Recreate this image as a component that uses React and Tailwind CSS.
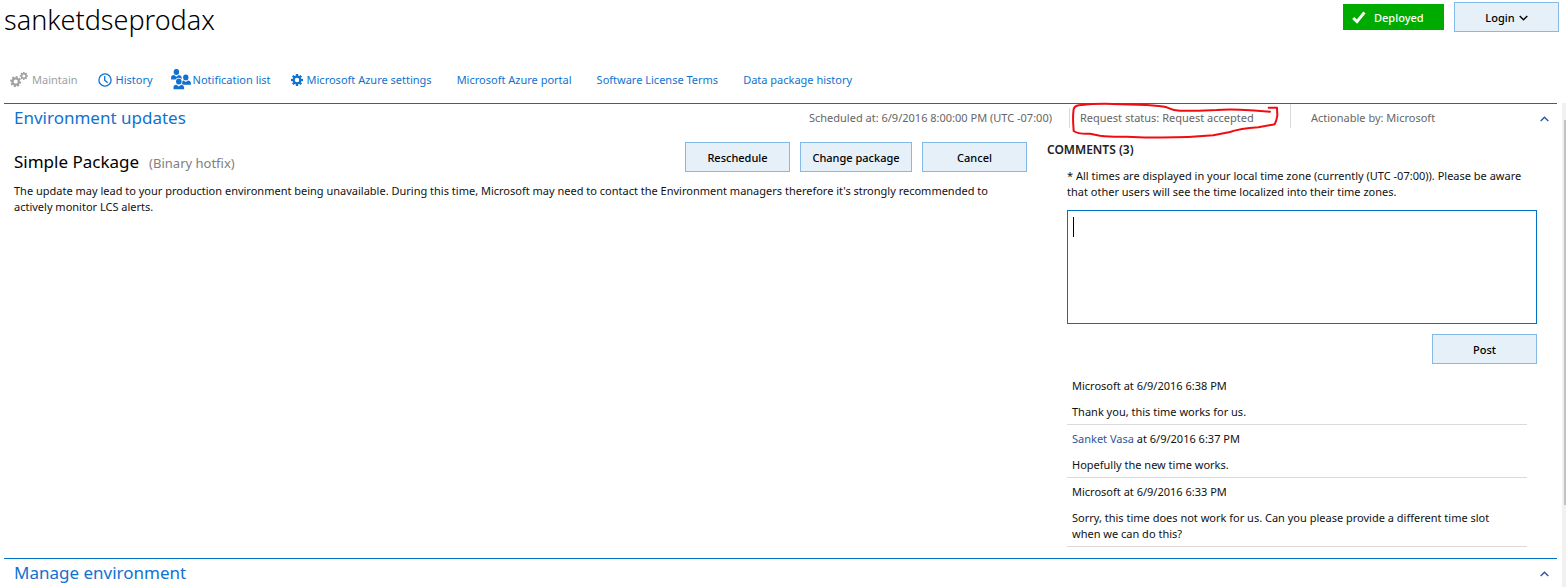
import { useState } from "react";

const COMMENTS = [
  { author: "Microsoft", time: "6/9/2016 6:38 PM", text: "Thank you, this time works for us." },
  { author: "Sanket Vasa", link: true, time: "6/9/2016 6:37 PM", text: "Hopefully the new time works." },
  {
    author: "Microsoft",
    time: "6/9/2016 6:33 PM",
    text: "Sorry, this time does not work for us. Can you please provide a different time slot when we can do this?",
  },
];

const TEETH = [0, 45, 90, 135, 180, 225, 270, 315];

function Gear({ x, y, scale = 1, rotate = 0 }) {
  return (
    <g transform={`translate(${x} ${y}) scale(${scale}) rotate(${rotate})`}>
      <circle r="3.4" fill="none" stroke="currentColor" strokeWidth="2.2" />
      {TEETH.map((angle) => (
        <rect key={angle} x="-1.2" y="-6.1" width="2.4" height="2.4" fill="currentColor" transform={`rotate(${angle})`} />
      ))}
    </g>
  );
}

function GearsIcon() {
  return (
    <svg width="18" height="18" viewBox="0 0 18 18" aria-hidden="true">
      <Gear x={5.7} y={10.6} scale={0.9} rotate={12} />
      <Gear x={13.8} y={4.9} scale={0.66} />
    </svg>
  );
}

function GearIcon() {
  return (
    <svg width="12" height="14" viewBox="0 0 12 14" aria-hidden="true">
      <Gear x={6} y={7} scale={0.98} />
    </svg>
  );
}

function ClockIcon() {
  return (
    <svg width="14" height="14" viewBox="0 0 14 14" fill="none" stroke="currentColor" strokeWidth="1.3" aria-hidden="true">
      <circle cx="7" cy="7" r="6.1" />
      <path d="M6.7 3v4.2l3 2.6" />
    </svg>
  );
}

function Person({ x, y, scale = 1 }) {
  return (
    <g transform={`translate(${x} ${y}) scale(${scale})`}>
      <ellipse cx="5" cy="2.9" rx="2.8" ry="3" />
      <path d="M-.3 10.6V8.6Q-.3 6.5 2.6 6.1L5 7.8l2.4-1.7q2.9.4 2.9 2.5v2z" />
    </g>
  );
}

function PeopleIcon() {
  return (
    <svg width="20" height="22" viewBox="0 0 20 22" fill="currentColor" aria-hidden="true">
      <Person x={0.4} y={0} />
      <Person x={10} y={5.6} scale={0.96} />
      <g stroke="#fff" strokeWidth="1.6">
        <Person x={2.8} y={9.6} />
      </g>
      <Person x={2.8} y={9.6} />
    </svg>
  );
}

function Chevron({ up = false }) {
  return (
    <svg width="9" height="6" viewBox="0 0 9 6" fill="none" stroke="currentColor" strokeWidth="1.4" aria-hidden="true">
      <path d={up ? "M.7 5 4.5 1.2 8.3 5" : "M.7 1 4.5 4.8 8.3 1"} />
    </svg>
  );
}

function Button({ children, className = "w-[105px]" }) {
  return (
    <button
      type="button"
      className={`flex h-[30px] items-center justify-center gap-1 whitespace-nowrap border border-[#84bae7] bg-[#e5f0f9] pt-px font-medium text-black ${className}`}
    >
      {children}
    </button>
  );
}

function NavLink({ icon, children, className = "gap-1" }) {
  return (
    <a href="#" className={`flex items-center whitespace-nowrap text-[#0f72d0] ${className}`}>
      {icon}
      {children}
    </a>
  );
}

function Toggle({ label, open, onToggle }) {
  return (
    <button
      type="button"
      aria-label={label}
      aria-expanded={open}
      onClick={onToggle}
      className="flex h-[29px] w-[26px] items-center justify-center text-[#2b579a]"
    >
      <Chevron up={open} />
    </button>
  );
}

function StatusMarker() {
  return (
    <svg
      className="pointer-events-none absolute -top-0.5 left-px h-[38px] w-[210px]"
      viewBox="90 21 630 114"
      fill="none"
      stroke="#f00d12"
      strokeWidth="6"
      strokeLinecap="round"
      strokeLinejoin="round"
      aria-hidden="true"
    >
      <path d="M686 38H711L712 62Q709 80 704 88L655 97Q600 101 570 111L520 121Q400 132 260 125Q210 126 180 122L150 116Q115 118 101 108L100 92Q98 65 101 42Q105 32 116 31Q180 24 240 28L320 30Q360 32 380 37Q398 46 420 47Q490 48 530 45Q560 42 600 44Q640 46 690 50" />
    </svg>
  );
}

function CommentsPanel() {
  const [draft, setDraft] = useState("");
  return (
    <section className="w-[510px] shrink-0 pr-5">
      <h3 className="text-[12px] leading-4 font-semibold text-[#222]">COMMENTS (3)</h3>
      <div className="pt-[10px] pl-5">
        <label htmlFor="comment" className="block">
          * All times are displayed in your local time zone (currently (UTC -07:00)). Please be aware that other users
          will see the time localized into their time zones.
        </label>
        <div className="relative mt-[10px]">
          <textarea
            id="comment"
            value={draft}
            onChange={(e) => setDraft(e.target.value)}
            className="block h-[114px] w-full resize-none border border-[#0072c6] px-1.5 py-2 outline-none"
          />
          {draft === "" && <span className="pointer-events-none absolute top-[7px] left-1.5 h-5 w-px bg-black" />}
        </div>
        <div className="mt-[10px] flex justify-end">
          <Button>Post</Button>
        </div>
        <ul className="mt-2 mr-[10px]">
          {COMMENTS.map((comment) => (
            <li key={comment.time} className="border-b border-[#dadada] pt-1.5 pr-5 pb-1 pl-[5px]">
              <p>
                {comment.link ? (
                  <a href="#" className="text-[#2b579a]">
                    {comment.author}
                  </a>
                ) : (
                  comment.author
                )}{" "}
                at {comment.time}
              </p>
              <p className="mt-[10px]">{comment.text}</p>
            </li>
          ))}
        </ul>
      </div>
    </section>
  );
}

export default function App() {
  const [updatesOpen, setUpdatesOpen] = useState(true);
  const [manageOpen, setManageOpen] = useState(true);

  return (
    <div className="flex min-h-screen flex-col bg-white font-['Noto_Sans','Open_Sans',sans-serif] text-[11px] leading-4 text-[#111]">
      <header className="flex items-start justify-between pt-0.5 pr-[7px] pl-1">
        <h1 className="text-[27px] leading-9 font-light text-black">sanketdseprodax</h1>
        <div className="flex gap-[10px]">
          <span className="mt-0.5 flex h-[26px] w-[101px] items-center gap-2 bg-[#00ab00] pt-px pl-[9px] font-medium text-white">
            <svg width="14" height="13" viewBox="0 0 14 13" fill="none" stroke="currentColor" strokeWidth="3" aria-hidden="true">
              <path d="M1.2 7 5 10.6 12.4 1.4" />
            </svg>
            Deployed
          </span>
          <Button>
            Login
            <Chevron />
          </Button>
        </div>
      </header>

      <nav className="mt-[31px] mb-[12px] flex h-[22px] items-center gap-[25px] pl-[10px]">
        <div className="flex items-center gap-5">
          <button type="button" disabled className="flex items-center gap-1 text-[#a0a0a0]">
            <GearsIcon />
            Maintain
          </button>
          <div className="flex items-center gap-[18px]">
            <NavLink icon={<ClockIcon />}>History</NavLink>
            <NavLink icon={<PeopleIcon />} className="gap-0.5">
              Notification list
            </NavLink>
          </div>
          <NavLink icon={<GearIcon />}>Microsoft Azure settings</NavLink>
        </div>
        <NavLink>Microsoft Azure portal</NavLink>
        <NavLink>Software License Terms</NavLink>
        <NavLink>Data package history</NavLink>
      </nav>

      <div className="flex grow">
        <main className="min-w-0 grow pl-1">
          <section className="border-t border-[#0072c6]">
            <div className="flex items-start justify-between pl-[10px]">
              <h2 className="text-[17px] leading-7 text-[#0f72d0]">Environment updates</h2>
              <div className="flex items-start text-[#666]">
                <p className="py-1.5 pr-[17px]">Scheduled at: 6/9/2016 8:00:00 PM (UTC -07:00)</p>
                <div className="relative w-[221px]">
                  <p className="mt-1 border-l border-[#dadada] py-0.5 pl-[10px]">Request status: Request accepted</p>
                  <StatusMarker />
                </div>
                <p className="w-[241px] border-l border-[#dadada] pt-1.5 pb-0.5 pl-5">Actionable by: Microsoft</p>
                <Toggle label="Environment updates" open={updatesOpen} onToggle={() => setUpdatesOpen(!updatesOpen)} />
              </div>
            </div>
            {updatesOpen && (
              <div className="flex gap-5 pt-[9px] pb-[11px] pl-[10px]">
                <div className="min-w-0 grow">
                  <div className="flex items-start justify-between">
                    <h3 className="flex items-baseline gap-[10px] pt-2 text-[17px] leading-6 text-black">
                      Simple Package
                      <span className="text-[13px] text-[#808080]">(Binary hotfix)</span>
                    </h3>
                    <div className="flex gap-[10px]">
                      <Button>Reschedule</Button>
                      <Button className="w-[112px]">Change package</Button>
                      <Button>Cancel</Button>
                    </div>
                  </div>
                  <p className="mt-2">
                    The update may lead to your production environment being unavailable. During this time, Microsoft may
                    need to contact the Environment managers therefore it's strongly recommended to actively monitor LCS
                    alerts.
                  </p>
                </div>
                <CommentsPanel />
              </div>
            )}
          </section>

          <section className="border-t border-[#0072c6]">
            <div className="flex items-start justify-between pl-[10px]">
              <h2 className="text-[17px] leading-7 text-[#0f72d0]">Manage environment</h2>
              <Toggle label="Manage environment" open={manageOpen} onToggle={() => setManageOpen(!manageOpen)} />
            </div>
          </section>
        </main>
        <div className="ml-[5px] w-1 shrink-0 bg-[#f1f1f1] pt-[17px] pl-0.5" aria-hidden="true">
          <div className="h-[385px] bg-[#c1c1c1]" />
        </div>
      </div>
    </div>
  );
}
